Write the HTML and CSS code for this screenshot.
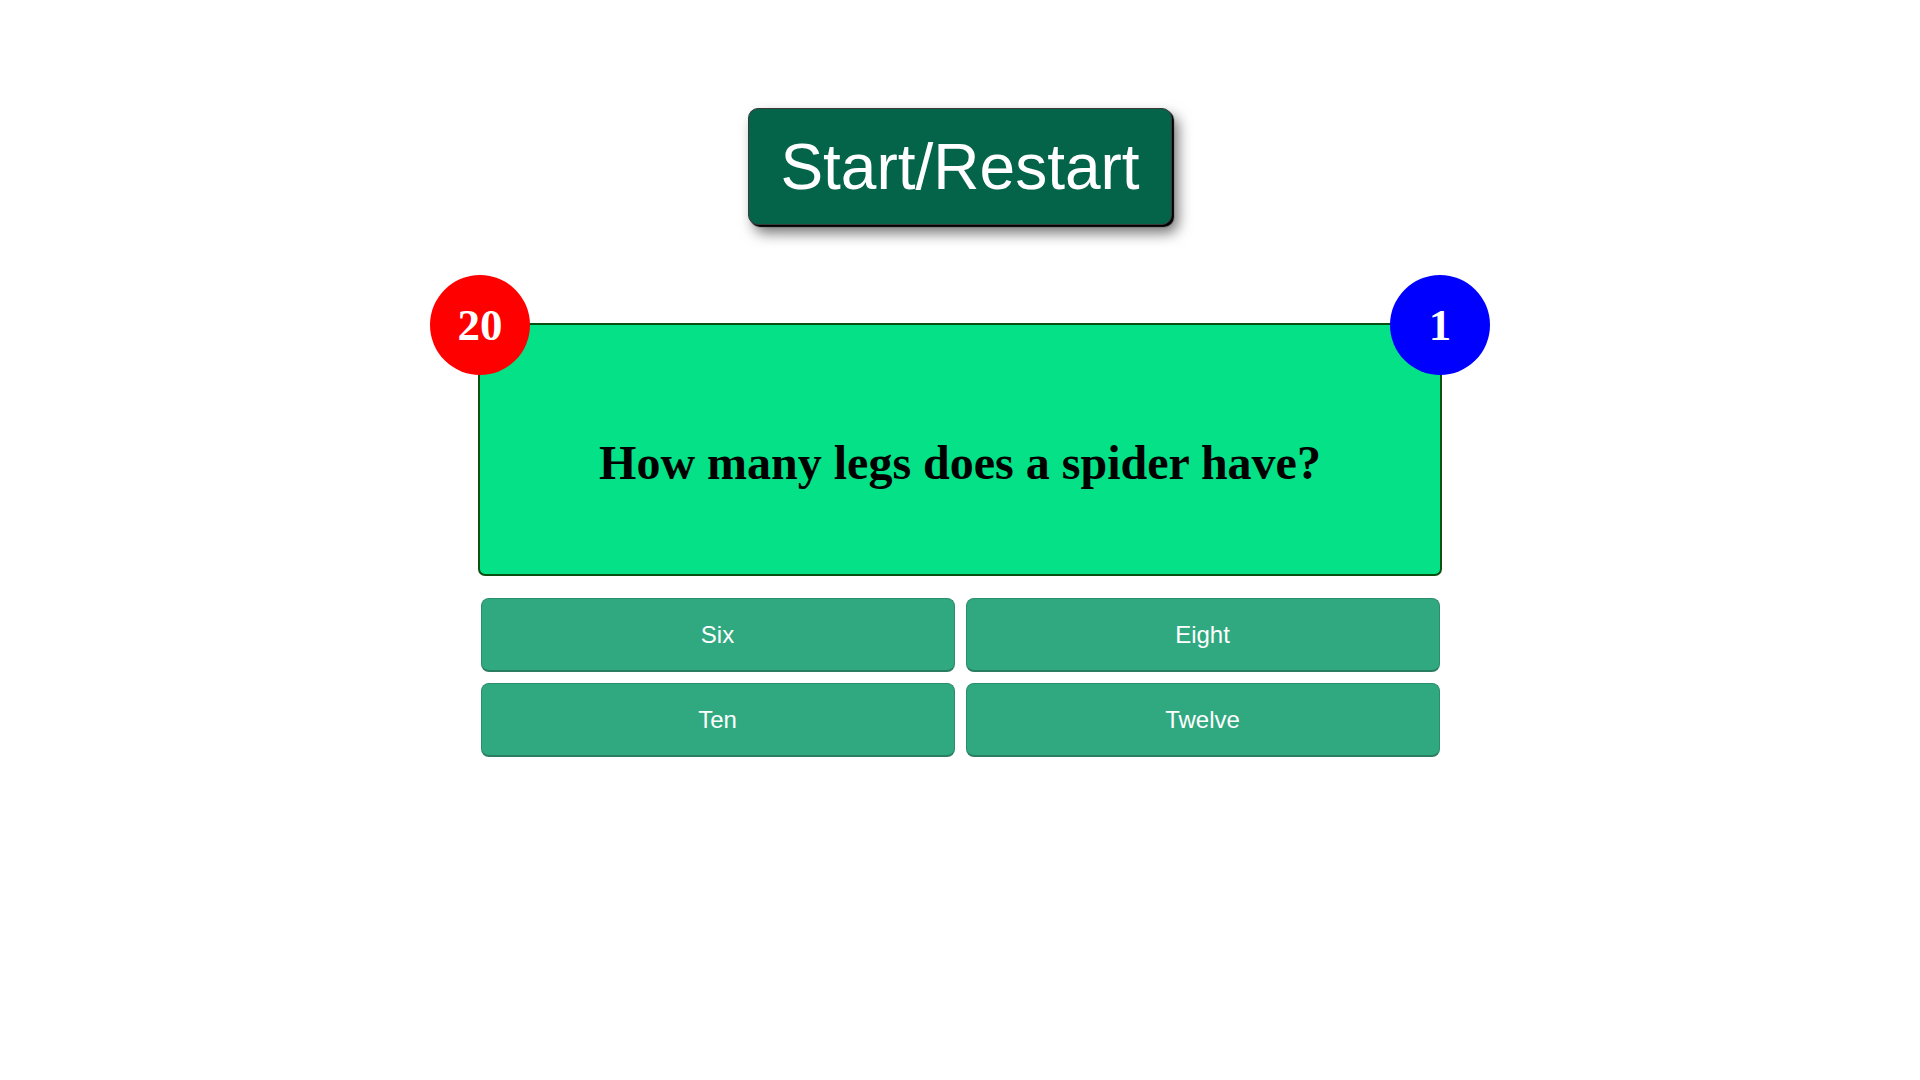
FILE: index.html
```html
<!DOCTYPE html>
<html lang="en">
<head>
<meta charset="utf-8">
<title>Quiz</title>
<link rel="stylesheet" href="styles.css">
</head>
<body>
<main class="page">
  <button class="start-btn">Start/Restart</button>
  <section class="quiz">
    <div class="badge badge-timer">20</div>
    <div class="badge badge-score">1</div>
    <div class="question-box">
      <h2 class="question">How many legs does a spider have?</h2>
    </div>
    <div class="answers">
      <button class="answer">Six</button>
      <button class="answer">Eight</button>
      <button class="answer">Ten</button>
      <button class="answer">Twelve</button>
    </div>
  </section>
</main>
</body>
</html>
```

FILE: styles.css
```css
html, body {
  margin: 0;
  padding: 0;
  background: #ffffff;
}

.page {
  display: flex;
  flex-direction: column;
  align-items: center;
  padding-top: 108px;
  font-family: "Liberation Sans", Arial, sans-serif;
}

.start-btn {
  box-sizing: border-box;
  width: 424px;
  height: 117px;
  background: #036449;
  color: #ffffff;
  font-family: "Liberation Sans", Arial, sans-serif;
  font-size: 64px;
  border: 1px solid #3a3a3a;
  border-radius: 10px;
  box-shadow: 2px 2px 1px #000000, 6px 8px 14px rgba(0, 0, 0, 0.55);
  padding: 0;
  cursor: pointer;
}

.quiz {
  position: relative;
  width: 964px;
  margin-top: 98px;
}

.question-box {
  box-sizing: border-box;
  height: 253px;
  background: #04e186;
  border: 2px solid #0a4f12;
  border-radius: 2px 2px 7px 7px;
  display: flex;
  justify-content: center;
  padding-top: 110px;
}

.question {
  margin: 0;
  font-family: "Liberation Serif", "Times New Roman", serif;
  font-weight: bold;
  font-size: 48px;
  line-height: 55px;
  color: #000000;
}

.badge {
  position: absolute;
  top: -48px;
  width: 100px;
  height: 100px;
  border-radius: 50%;
  display: flex;
  align-items: center;
  justify-content: center;
  color: #ffffff;
  font-family: "Liberation Serif", "Times New Roman", serif;
  font-weight: bold;
  font-size: 45px;
  z-index: 2;
}

.badge-timer {
  left: -48px;
  background: #ff0000;
}

.badge-score {
  right: -48px;
  background: #0000ff;
}

.answers {
  display: grid;
  grid-template-columns: 474px 474px;
  column-gap: 11px;
  row-gap: 11px;
  justify-content: center;
  margin-top: 22px;
}

.answer {
  box-sizing: border-box;
  height: 74px;
  background: #30a880;
  color: #ffffff;
  font-family: "Liberation Sans", Arial, sans-serif;
  font-size: 24px;
  border: 1px solid #2a8e6b;
  border-bottom: 2px solid #2a7d60;
  border-radius: 8px;
  padding: 0;
  cursor: pointer;
}
```
